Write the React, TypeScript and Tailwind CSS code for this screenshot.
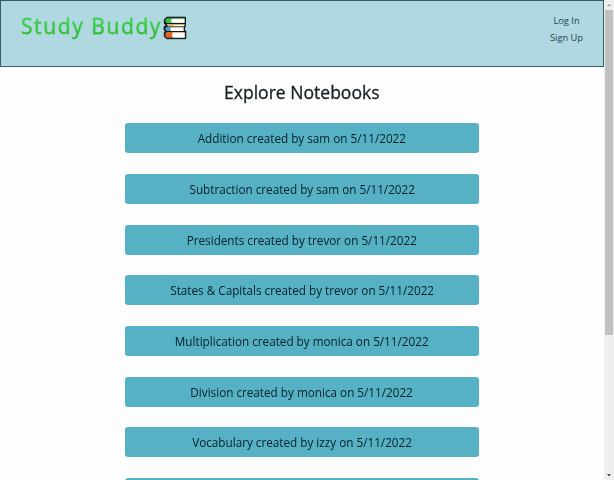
const notebooks = [
  { title: 'Addition', author: 'sam' },
  { title: 'Subtraction', author: 'sam' },
  { title: 'Presidents', author: 'trevor' },
  { title: 'States & Capitals', author: 'trevor' },
  { title: 'Multiplication', author: 'monica' },
  { title: 'Division', author: 'monica' },
  { title: 'Vocabulary', author: 'izzy' },
];

function BooksIcon() {
  return (
    <svg viewBox="0 0 24 24" className="mt-[14.5px] size-6" strokeLinejoin="round">
      <path d="M4 1.2H22.5V8H22.2V11.2H21.6V15H22.8V22.7H3.5L1.3 20.5V16.8L2.2 15.2L1 13.5V11L2.8 9.2L1.3 7.2V3.5Z" fill="#101c20" stroke="#101c20" strokeWidth="1" />
      <path d="M4 2.3H21.5V7H4.2L2.5 5.8V3.5Z" fill="#43bd45" />
      <path d="M9 2.8H21.5V6.7H9L8 4.9Z" fill="#fff" />
      <path d="M3.5 8H21.5V10.4H5Z" fill="#dbad68" />
      <path d="M10 9H21V9.9H10Z" fill="#fff" />
      <path d="M3.2 11.1H8L6.6 13L8 15H3.6L2.3 13.3V12Z" fill="#4a9fc5" />
      <path d="M7.8 11.3H20.7V15H7.8L7 13.2Z" fill="#fff" />
      <path d="M3.8 16.1H21.5V17H9.8L8.8 19L9.8 21.8H3.8L2.3 20V17.4Z" fill="#df6425" />
      <path d="M9.8 16.5H21.8V21.8H9.8L8.8 19Z" fill="#fff" />
    </svg>
  );
}

function Header() {
  return (
    <header className="flex h-[67px] justify-between border border-[#385b65] bg-[#afd8e0]">
      <div className="flex pl-5">
        <h1 className="mt-[10px] h-[31px] w-[142px] bg-linear-to-b from-[#3bdf57] from-20% to-[#30b52c] to-80% bg-clip-text text-[21px] leading-[31px] tracking-[1.6px] whitespace-nowrap text-transparent [-webkit-text-stroke:0.3px_#36c840]">Study Buddy</h1>
        <BooksIcon />
      </div>
      <nav className="mt-3 mr-[10.5px] flex w-[52px] flex-col items-center text-[9.3px] leading-[16.5px] whitespace-nowrap text-[#244651]">
        <a href="#login">Log In</a>
        <a href="#signup">Sign Up</a>
      </nav>
    </header>
  );
}

function Scrollbar() {
  return (
    <div className="flex w-[10px] shrink-0 flex-col items-center bg-[#efefef]">
      <svg viewBox="0 0 10 10" className="size-[10px]"><path d="M3 6L5 4L7 6Z" fill="#999" /></svg>
      <div className="h-[325px] w-2 bg-[#c1c1c1]" />
      <svg viewBox="0 0 10 10" className="mt-auto size-[10px]"><path d="M3 4H7L5 6.5Z" fill="#444" /></svg>
    </div>
  );
}

export default function App() {
  return (
    <div className="flex h-[480px] w-[614px] overflow-hidden bg-[#fdfdfd] font-['Open_Sans','Noto_Sans',sans-serif]">
      <div className="min-w-0 flex-1">
        <Header />
        <main className="flex flex-col items-center">
          <h2 className="mt-[12px] h-[26px] scale-x-[0.975] text-[18px] leading-[26px] whitespace-nowrap text-[#151f21] [-webkit-text-stroke:0.3px_#151f21]">Explore Notebooks</h2>
          <div className="mt-[18.4px] flex w-[354px] flex-col gap-[20.65px]">
            {notebooks.map((n) => (
              <div key={n.title} className="flex h-[30px] justify-center rounded-[3px] bg-[#55b1c3] text-[12.8px] leading-[31px] whitespace-nowrap text-[#062029]">
                <span className="scale-x-[0.915]">{n.title} created by {n.author} on 5/11/2022</span>
              </div>
            ))}
            <div className="h-[3px] rounded-t-[3px] bg-[#55b1c3]" />
          </div>
        </main>
      </div>
      <Scrollbar />
    </div>
  );
}
